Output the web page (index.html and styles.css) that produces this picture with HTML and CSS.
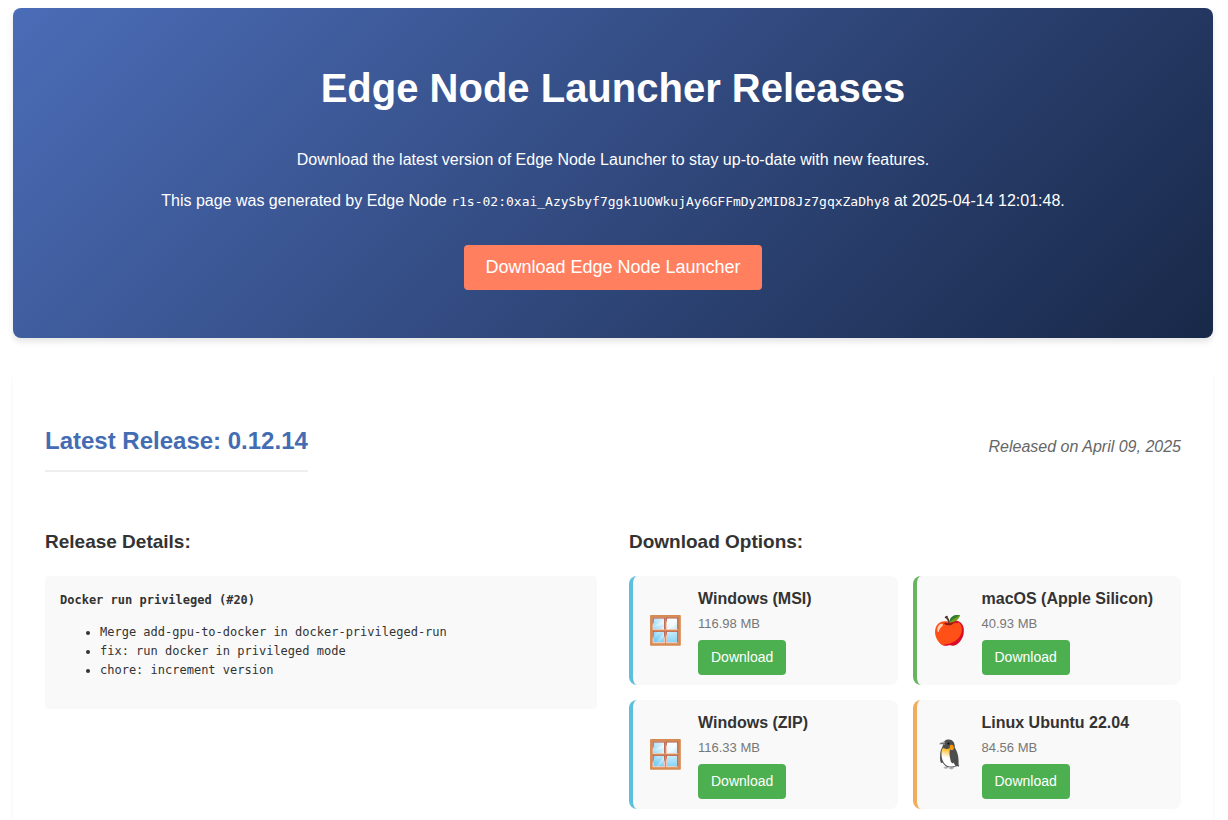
FILE: index.html
```html
<!DOCTYPE html>
<html lang="en">
<head>
<meta charset="utf-8">
<title>Edge Node Launcher Releases</title>
<link rel="stylesheet" href="styles.css">
</head>
<body>
<header class="hero">
  <h1>Edge Node Launcher Releases</h1>
  <p>Download the latest version of Edge Node Launcher to stay up-to-date with new features.</p>
  <p>This page was generated by Edge Node <code>r1s-02:0xai_AzySbyf7ggk1UOWkujAy6GFFmDy2MID8Jz7gqxZaDhy8</code> at 2025-04-14 12:01:48.</p>
  <button class="hero-button" type="button">Download Edge Node Launcher</button>
</header>
<main class="latest">
  <div class="release-header">
    <h2>Latest Release: 0.12.14</h2>
    <span class="release-date">Released on April 09, 2025</span>
  </div>
  <div class="release-grid">
    <section>
      <h3>Release Details:</h3>
      <div class="notes">
        <h4>Docker run privileged (#20)</h4>
        <ul>
          <li>Merge add-gpu-to-docker in docker-privileged-run</li>
          <li>fix: run docker in privileged mode</li>
          <li>chore: increment version</li>
        </ul>
      </div>
    </section>
    <section>
      <h3>Download Options:</h3>
      <div class="options">
        <article class="option windows">
          <span class="os-icon">🪟</span>
          <div><h4>Windows (MSI)</h4><p>116.98 MB</p><a class="download" href="#">Download</a></div>
        </article>
        <article class="option macos">
          <span class="os-icon">🍎</span>
          <div><h4>macOS (Apple Silicon)</h4><p>40.93 MB</p><a class="download" href="#">Download</a></div>
        </article>
        <article class="option windows">
          <span class="os-icon">🪟</span>
          <div><h4>Windows (ZIP)</h4><p>116.33 MB</p><a class="download" href="#">Download</a></div>
        </article>
        <article class="option linux">
          <span class="os-icon">🐧</span>
          <div><h4>Linux Ubuntu 22.04</h4><p>84.56 MB</p><a class="download" href="#">Download</a></div>
        </article>
      </div>
    </section>
  </div>
</main>
</body>
</html>
```
FILE: styles.css
```css
* { box-sizing: border-box; }
body { margin: 0; padding: 8px 15px 0 13px; background: #fff; color: #333; font: 16px/1.6 "Liberation Sans", Arial, sans-serif; }
.hero { padding: 48px 32px; border-radius: 8px; background: linear-gradient(135deg, #4b6cb7 0%, #182848 100%); box-shadow: 0 4px 6px rgba(0,0,0,.1); color: #fff; text-align: center; }
.hero h1 { margin: 0 0 27px; font-size: 40px; line-height: 64px; }
.hero p { margin: 0 0 16px; line-height: 25px; }
.hero code { font: 13px "DejaVu Sans Mono", monospace; }
.hero-button { margin: 16px 0 0; padding: 8px 21px; border: 0; border-radius: 4px; background: #ff7f5f; color: #fff; font: 18px/29px "Liberation Sans", Arial, sans-serif; }
.latest { margin-top: 32px; padding: 32px; border-radius: 8px; box-shadow: 0 2px 4px rgba(0,0,0,.05); }
.release-header { display: flex; justify-content: space-between; align-items: center; margin-bottom: 35px; }
h2 { margin: 20px 0; padding-bottom: 10px; border-bottom: 2px solid #eee; color: #446cb3; font-size: 24px; line-height: 38px; }
.release-date { color: #666; font-style: italic; }
.release-grid { display: grid; grid-template-columns: 1fr 1fr; gap: 32px; }
h3 { margin: 0 0 19px; font-size: 19px; line-height: 30px; }
.notes { padding: 15px; border-radius: 4px; background: #f9f9f9; font: 12px/19px "DejaVu Sans Mono", monospace; }
.notes h4 { margin: 0 0 13px; }
.notes ul { margin: 0 0 14px; padding-left: 40px; }
.options { display: grid; grid-template-columns: 1fr 1fr; gap: 15px; }
.option { display: flex; align-items: center; gap: 15px; padding: 10px 15px; border-left: 4px solid #5bc0de; border-radius: 8px; background: #f9f9f9; }
.macos { border-left-color: #68b55f; }
.linux { border-left-color: #f0ad5e; }
.os-icon { font-size: 28px; line-height: 40px; }
.option h4 { margin: 0; font-size: 16px; line-height: 25px; }
.option p { margin: 0 0 4px; color: #777; font-size: 13px; line-height: 25px; }
.download { display: inline-block; padding: 6px 13px; border-radius: 4px; background: #4caf50; color: #fff; font-size: 14px; line-height: 23px; text-decoration: none; }
```
